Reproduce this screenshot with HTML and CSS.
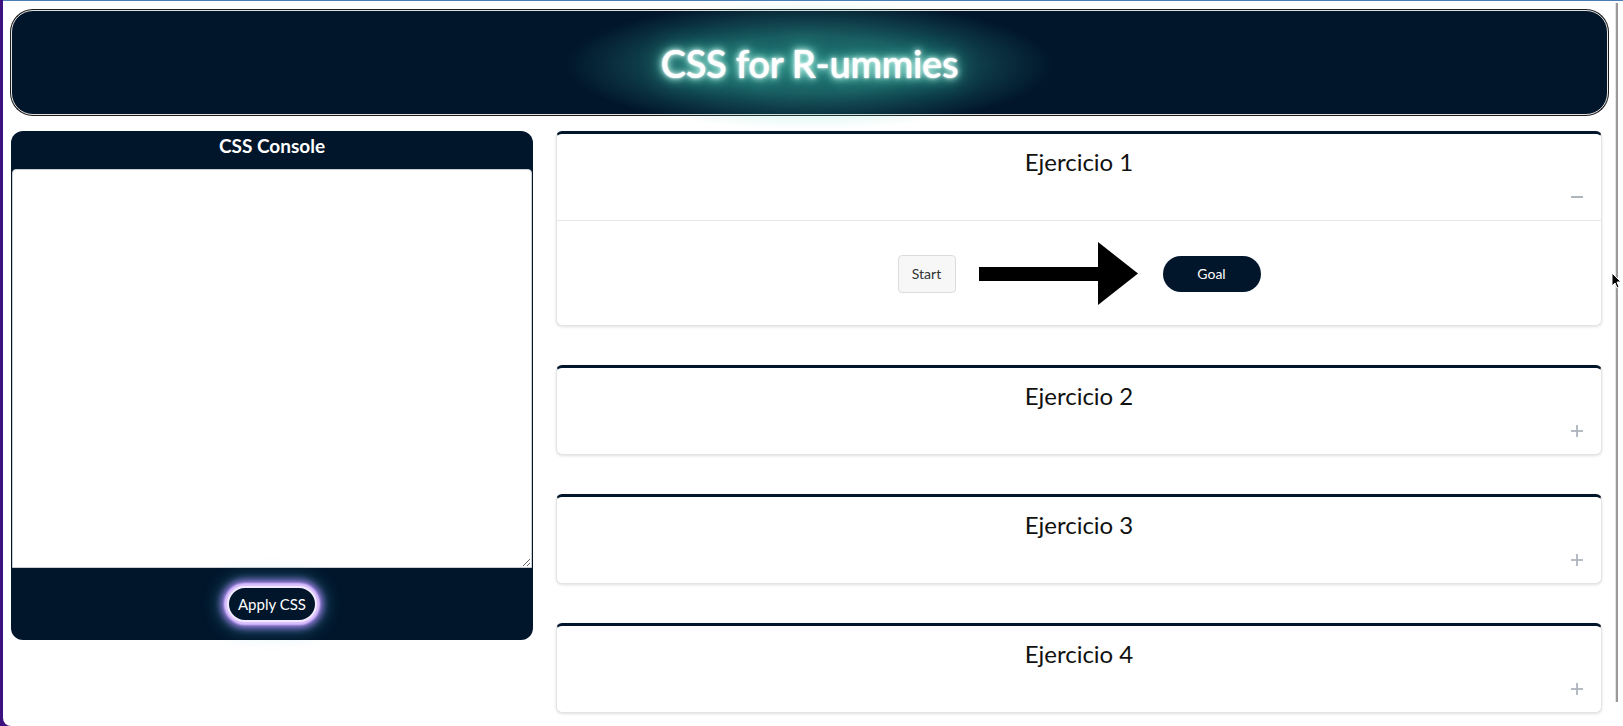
FILE: index.html
```html
<!DOCTYPE html>
<html lang="es">
<head>
<meta charset="utf-8">
<title>CSS for R-ummies</title>
<link rel="stylesheet" href="styles.css">
</head>
<body>
<div class="desktop">
  <div class="window">
    <div class="main">
      <header class="banner">
        <h1 class="banner-title">CSS for R-ummies</h1>
      </header>
      <div class="content">
        <aside class="console">
          <h2 class="console-title">CSS Console</h2>
          <textarea class="console-input"></textarea>
          <div class="console-actions">
            <button class="apply-btn">Apply CSS</button>
          </div>
        </aside>
        <section class="exercises">
          <div class="card">
            <div class="card-header">
              <div class="card-title">Ejercicio 1</div>
              <div class="card-toggle">
                <svg class="toggle-icon" viewBox="0 0 12 12"><rect x="0" y="5" width="12" height="2" fill="#adb5bd"/></svg>
              </div>
            </div>
            <div class="card-body">
              <button class="start-btn">Start</button>
              <svg class="arrow" viewBox="0 0 159 63"><rect x="0" y="25" width="120" height="14" fill="#000"/><polygon points="119,0 159,31.5 119,63" fill="#000"/></svg>
              <button class="goal-btn">Goal</button>
            </div>
          </div>
          <div class="card">
            <div class="card-header">
              <div class="card-title">Ejercicio 2</div>
              <div class="card-toggle">
                <svg class="toggle-icon" viewBox="0 0 12 12"><rect x="0" y="5.1" width="12" height="1.8" fill="#adb5bd"/><rect x="5.1" y="0" width="1.8" height="12" fill="#adb5bd"/></svg>
              </div>
            </div>
          </div>
          <div class="card">
            <div class="card-header">
              <div class="card-title">Ejercicio 3</div>
              <div class="card-toggle">
                <svg class="toggle-icon" viewBox="0 0 12 12"><rect x="0" y="5.1" width="12" height="1.8" fill="#adb5bd"/><rect x="5.1" y="0" width="1.8" height="12" fill="#adb5bd"/></svg>
              </div>
            </div>
          </div>
          <div class="card">
            <div class="card-header">
              <div class="card-title">Ejercicio 4</div>
              <div class="card-toggle">
                <svg class="toggle-icon" viewBox="0 0 12 12"><rect x="0" y="5.1" width="12" height="1.8" fill="#adb5bd"/><rect x="5.1" y="0" width="1.8" height="12" fill="#adb5bd"/></svg>
              </div>
            </div>
          </div>
        </section>
      </div>
    </div>
    <div class="scrollbar"><div class="scroll-thumb"></div></div>
    <svg class="cursor" viewBox="0 0 10 16"><polygon points="0,0 0,13 3,10 5,15 7,14 5,9 9,9" fill="#000" stroke="#fff" stroke-width="1"/></svg>
  </div>
</div>
</body>
</html>
```

FILE: styles.css
```css
html, body {
  margin: 0;
  padding: 0;
  height: 100%;
}

body {
  background: #3d1280;
  font-family: "Lato", "Open Sans", sans-serif;
  overflow: hidden;
}

.desktop {
  height: 726px;
  padding-left: 3px;
  box-sizing: border-box;
}

.window {
  position: relative;
  display: flex;
  height: 726px;
  background: #fff;
  border-top: 1px solid #4a7db5;
  border-bottom-left-radius: 8px;
  box-sizing: border-box;
}

.main {
  flex: 1;
  min-width: 0;
  padding: 9px 0 0 8px;
}

/* Banner */
.banner {
  height: 105px;
  margin-right: 1px;
  box-sizing: border-box;
  border: 1px solid #e2e2e2;
  box-shadow: 0 0 0 1px #1b1b1b;
  border-radius: 22px;
  background: #01162b;
  display: flex;
  align-items: center;
  justify-content: center;
}

.banner-title {
  position: relative;
  z-index: 0;
  margin: 0;
  color: #fff;
  font-size: 38px;
  font-weight: 600;
  letter-spacing: -0.3px;
  text-shadow:
    0 0 2px #fff,
    0 0 6px #e0fff8,
    0 0 12px #7ff0d8,
    0 0 24px #3cc8ae;
}

.banner-title::before {
  content: "";
  position: absolute;
  z-index: -1;
  top: -40px;
  bottom: -68px;
  left: -95px;
  right: -95px;
  background: radial-gradient(ellipse closest-side at 50% 42%,
    rgba(70, 215, 190, 0.45) 0%,
    rgba(70, 215, 190, 0.36) 45%,
    rgba(70, 215, 190, 0.16) 75%,
    rgba(70, 215, 190, 0) 100%);
}

/* Content */
.content {
  display: flex;
  gap: 23px;
  margin-top: 16px;
  padding-right: 7px;
  align-items: flex-start;
}

/* Console */
.console {
  width: 522px;
  height: 509px;
  flex: none;
  background: #01162b;
  border-radius: 12px;
  display: flex;
  flex-direction: column;
}

.console-title {
  margin: 0;
  height: 38px;
  box-sizing: border-box;
  padding-top: 4px;
  font-size: 19px;
  line-height: 22px;
  font-weight: 700;
  color: #fff;
  text-align: center;
}

.console-input {
  display: block;
  margin: 0 1px;
  height: 399px;
  box-sizing: border-box;
  border: 1px solid #c9ccd1;
  border-radius: 4px 4px 0 0;
  background: #fff;
  resize: vertical;
  font-family: "Liberation Mono", monospace;
  font-size: 13px;
}

.console-actions {
  flex: 1;
  display: flex;
  align-items: center;
  justify-content: center;
}

.apply-btn {
  width: 90px;
  height: 36px;
  border-radius: 18px;
  border: 2px solid #f3eaff;
  background: #01162b;
  color: #fff;
  font-family: inherit;
  font-size: 15px;
  padding: 0;
  box-shadow:
    0 0 2px 3px #dcc2ff,
    0 0 7px 6px #a27de6,
    0 0 16px 10px rgba(70, 170, 200, 0.35);
}

/* Exercises */
.exercises {
  flex: 1;
  min-width: 0;
  display: flex;
  flex-direction: column;
  gap: 39px;
}

.card {
  background: #fff;
  border: 1px solid #e4e4e4;
  border-top: 3px solid #01162b;
  border-radius: 6px;
  box-shadow: 0 1px 3px rgba(0, 0, 0, 0.12);
}

.card-header {
  height: 86px;
  box-sizing: border-box;
  padding: 14px 18px 0 18px;
}

.card-title {
  text-align: center;
  font-size: 24px;
  line-height: 28px;
  color: #111;
}

.card-toggle {
  display: flex;
  justify-content: flex-end;
  margin-top: 15px;
}

.toggle-icon {
  width: 12px;
  height: 12px;
  display: block;
}

.card-body {
  border-top: 1px solid #e6e6e6;
  padding: 21px 0 20px;
  display: flex;
  align-items: center;
  justify-content: center;
}

.start-btn {
  width: 58px;
  height: 38px;
  padding: 0;
  background: #f7f7f7;
  border: 1px solid #dcdcdc;
  border-radius: 4px;
  font-family: inherit;
  font-size: 14px;
  color: #333;
}

.arrow {
  width: 159px;
  height: 63px;
  margin: 0 25px 0 23px;
  display: block;
}

.goal-btn {
  width: 98px;
  height: 36px;
  padding: 0;
  border: none;
  border-radius: 18px;
  background: #01162b;
  color: #fff;
  font-family: inherit;
  font-size: 14px;
}

/* Scrollbar */
.scrollbar {
  width: 14px;
  flex: none;
  display: flex;
  justify-content: center;
}

.scroll-thumb {
  width: 2px;
  margin: 2px 0 24px;
  background: #9a9a9a;
  border-left: 1px solid #e4e4e4;
}

.cursor {
  position: absolute;
  left: 1609px;
  top: 272px;
  width: 10px;
  height: 16px;
}
```
